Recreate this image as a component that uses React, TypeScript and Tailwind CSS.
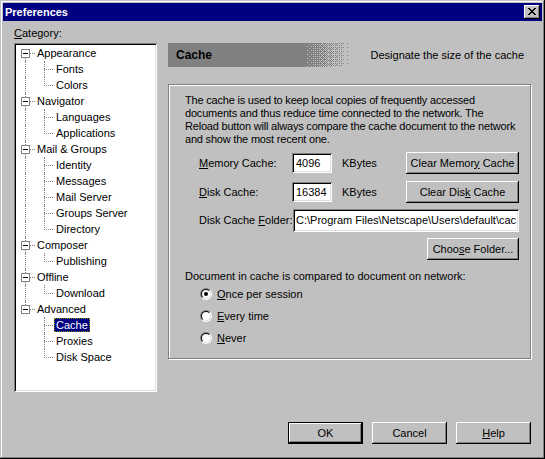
import React from 'react';

const raised =
  'shadow-[inset_-1px_-1px_0_#000,inset_1px_1px_0_#fff,inset_-2px_-2px_0_#808080]';
const sunken =
  'shadow-[inset_1px_1px_0_#808080,inset_-1px_-1px_0_#fff,inset_2px_2px_0_#000,inset_-2px_-2px_0_#dfdfdf]';

const tree = [
  { label: 'Appearance', children: ['Fonts', 'Colors'] },
  { label: 'Navigator', children: ['Languages', 'Applications'] },
  { label: 'Mail & Groups', children: ['Identity', 'Messages', 'Mail Server', 'Groups Server', 'Directory'] },
  { label: 'Composer', children: ['Publishing'] },
  { label: 'Offline', children: ['Download'] },
  { label: 'Advanced', children: ['Cache', 'Proxies', 'Disk Space'] },
];

const bayer = [
  [0, 8, 2, 10],
  [12, 4, 14, 6],
  [3, 11, 1, 9],
  [15, 7, 13, 5],
];

function ditherPath() {
  let d = 'M0 0h135v24h-135z';
  for (let x = 0; x < 45; x++) {
    const level = (1 - (x + 0.5) / 45) * 16;
    for (let y = 0; y < 24; y++) {
      if (bayer[y % 4][x % 4] < level) d += `M${135 + x} ${y}h1v1h-1z`;
    }
  }
  return d;
}

function Button({ children, w, isDefault }: { children: React.ReactNode; w: string; isDefault?: boolean }) {
  return (
    <div
      className={`${w} h-[22px] flex items-center justify-center bg-[#c0c0c0] ${raised} ${
        isDefault ? 'border border-black' : ''
      }`}
    >
      <span className="whitespace-nowrap">{children}</span>
    </div>
  );
}

function Radio({ checked, children }: { checked?: boolean; children: React.ReactNode }) {
  return (
    <div className="flex items-center h-[22px] pl-[15px]">
      <span className="w-[12px] h-[12px] rounded-full border border-t-[#808080] border-l-[#808080] border-r-white border-b-white">
        <span className="w-[10px] h-[10px] rounded-full border border-t-black border-l-black border-r-[#dfdfdf] border-b-[#dfdfdf] bg-white flex items-center justify-center">
          {checked && <span className="w-[4px] h-[4px] rounded-full bg-black" />}
        </span>
      </span>
      <span className="ml-[5px]">{children}</span>
    </div>
  );
}

function TreeView() {
  return (
    <div className={`w-[143px] h-[349px] bg-white p-[2px] ${sunken}`}>
      {tree.map((p, pi) => {
        const lastP = pi === tree.length - 1;
        return (
          <React.Fragment key={p.label}>
            <div className="relative h-[16px] flex items-center pl-[21px]">
              {pi > 0 && <div className="absolute left-[9px] top-0 h-[4px] border-l border-dotted border-[#808080]" />}
              {!lastP && <div className="absolute left-[9px] top-[13px] h-[3px] border-l border-dotted border-[#808080]" />}
              <div className="absolute left-[5px] top-[4px] w-[9px] h-[9px] border border-[#808080] bg-white">
                <div className="absolute left-[1px] top-[3px] w-[5px] h-px bg-black" />
              </div>
              <div className="absolute left-[14px] top-[8px] w-[5px] border-t border-dotted border-[#808080]" />
              <span>{p.label}</span>
            </div>
            {p.children.map((c, ci) => {
              const lastC = ci === p.children.length - 1;
              const selected = c === 'Cache';
              return (
                <div key={c} className="relative h-[16px] flex items-center pl-[38px]">
                  {!lastP && <div className="absolute left-[9px] top-0 h-[16px] border-l border-dotted border-[#808080]" />}
                  <div
                    className={`absolute left-[28px] top-0 ${lastC ? 'h-[9px]' : 'h-[16px]'} border-l border-dotted border-[#808080]`}
                  />
                  <div className="absolute left-[28px] top-[8px] w-[9px] border-t border-dotted border-[#808080]" />
                  <span
                    className={`px-[2px] h-[14px] leading-[14px] ${
                      selected ? 'bg-[#000080] text-white outline outline-1 outline-dotted outline-[#808000] -outline-offset-1' : ''
                    }`}
                  >
                    {c}
                  </span>
                </div>
              );
            })}
          </React.Fragment>
        );
      })}
    </div>
  );
}

export default function App() {
  return (
    <div className="w-[545px] h-[459px] bg-[#c0c0c0] p-[3px] flex flex-col text-[11px] leading-[13px] text-black font-['Liberation_Sans',Arial,sans-serif] shadow-[inset_-1px_-1px_0_#000,inset_1px_1px_0_#c0c0c0,inset_-2px_-2px_0_#808080,inset_2px_2px_0_#fff]">
      {/* title bar */}
      <div className="h-[18px] bg-[#000080] flex items-center justify-between pl-[2px] pr-[2px]">
        <span className="text-white font-bold text-[11px]">Preferences</span>
        <div className={`w-[16px] h-[14px] bg-[#c0c0c0] flex items-center justify-center ${raised}`}>
          <svg width="8" height="7" viewBox="0 0 8 7" shapeRendering="crispEdges" className="-mt-px">
            <path d="M0 0h2v1h-2zM6 0h2v1h-2zM1 1h2v1h-2zM5 1h2v1h-2zM2 2h4v1h-4zM3 3h2v1h-2zM2 4h4v1h-4zM1 5h2v1h-2zM5 5h2v1h-2zM0 6h2v1h-2zM6 6h2v1h-2z" fill="#000" />
          </svg>
        </div>
      </div>

      <div className="flex-1 flex flex-col">
        <div className="flex pl-[11px]">
          {/* category tree */}
          <div className="w-[143px] shrink-0 flex flex-col">
            <div className="mt-[6px] h-[13px] mb-[3px]">
              <u>C</u>ategory:
            </div>
            <TreeView />
          </div>

          {/* cache page */}
          <div className="ml-[11px] w-[364px] pt-[22px]">
            <div className="relative h-[24px] flex items-center justify-between pl-[8px] pr-[8px]">
              <svg className="absolute inset-0" width="180" height="24" viewBox="0 0 180 24" shapeRendering="crispEdges">
                <path d={ditherPath()} fill="#808080" />
              </svg>
              <span className="relative font-bold text-[12px]">Cache</span>
              <span className="relative">Designate the size of the cache</span>
            </div>

            <div className="mt-[17px] w-[363px] h-[275px] border border-[#808080] shadow-[inset_1px_1px_0_#fff,1px_1px_0_#fff] pt-[9px] pl-[16px] pr-[11px]">
              <div className="whitespace-nowrap tracking-[-0.2px]">
                The cache is used to keep local copies of frequently accessed
                <br />
                documents and thus reduce time connected to the network. The
                <br />
                Reload button will always compare the cache document to the network
                <br />
                and show the most recent one.
              </div>

              <div className="mt-[6px] h-[22px] flex items-center">
                <span className="ml-[14px] w-[93px]">
                  <u>M</u>emory Cache:
                </span>
                <div className={`w-[40px] h-[20px] bg-white pl-[4px] flex items-center ${sunken}`}>4096</div>
                <span className="ml-[10px]">KBytes</span>
                <div className="ml-auto">
                  <Button w="w-[113px]">
                    Clear Memor<u>y</u> Cache
                  </Button>
                </div>
              </div>

              <div className="mt-[7px] h-[22px] flex items-center">
                <span className="ml-[14px] w-[93px]">
                  <u>D</u>isk Cache:
                </span>
                <div className={`w-[40px] h-[20px] bg-white pl-[4px] flex items-center ${sunken}`}>16384</div>
                <span className="ml-[10px]">KBytes</span>
                <div className="ml-auto">
                  <Button w="w-[113px]">
                    Clear Dis<u>k</u> Cache
                  </Button>
                </div>
              </div>

              <div className="mt-[6px] h-[23px] flex items-center">
                <span className="ml-[14px] w-[94px]">
                  Disk Cache <u>F</u>older:
                </span>
                <div className={`flex-1 h-[23px] bg-white pl-[3px] flex items-center overflow-hidden whitespace-nowrap ${sunken}`}>
                  <span>C:\Program Files\Netscape\Users\default\cac</span>
                </div>
              </div>

              <div className="mt-[6px] flex justify-end">
                <Button w="w-[92px]">
                  Choo<u>s</u>e Folder...
                </Button>
              </div>

              <div className="mt-[10px] h-[13px]">Document in cache is compared to document on network:</div>
              <Radio checked>
                <u>O</u>nce per session
              </Radio>
              <Radio>
                <u>E</u>very time
              </Radio>
              <Radio>
                <u>N</u>ever
              </Radio>
            </div>
          </div>
        </div>

        {/* dialog buttons */}
        <div className="mt-auto pb-[12px] pr-[11px] flex justify-end gap-[9px]">
          <Button w="w-[75px]" isDefault>
            OK
          </Button>
          <Button w="w-[75px]">Cancel</Button>
          <Button w="w-[75px]">
            <u>H</u>elp
          </Button>
        </div>
      </div>
    </div>
  );
}
